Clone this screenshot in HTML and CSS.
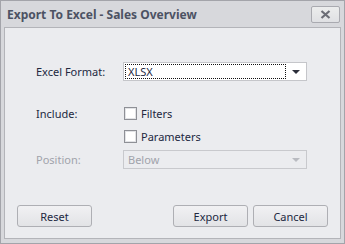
FILE: index.html
```html
<!DOCTYPE html>
<html>
<head>
  <meta charset="utf-8">
  <title>Export To Excel - Sales Overview</title>
  <link rel="stylesheet" href="styles.css">
</head>
<body>
  <div class="window">
    <div class="titlebar">
      <span class="title">Export To Excel - Sales Overview</span>
      <button class="close" title="Close">
        <svg width="11" height="9" viewBox="0 0 11 9"><path d="M1.5 1 L9.5 8 M9.5 1 L1.5 8" stroke="#6b6d76" stroke-width="2.2"/></svg>
      </button>
    </div>

    <div class="panel">
      <div class="row format-row">
        <label class="label">Excel Format:</label>
        <div class="combo">
          <span class="value focused">XLSX</span>
          <span class="arrow"></span>
        </div>
      </div>

      <div class="row check-row include-row">
        <label class="label">Include:</label>
        <span class="check"></span>
        <span class="check-text">Filters</span>
      </div>
      <div class="row check-row">
        <span class="label"></span>
        <span class="check"></span>
        <span class="check-text">Parameters</span>
      </div>

      <div class="row position-row disabled">
        <label class="label">Position:</label>
        <div class="combo">
          <span class="value">Below</span>
          <span class="arrow"></span>
        </div>
      </div>

      <div class="buttons">
        <button class="btn">Reset</button>
        <span class="spacer"></span>
        <button class="btn">Export</button>
        <button class="btn">Cancel</button>
      </div>
    </div>
  </div>
</body>
</html>
```

FILE: styles.css
```css
body {
  margin: 0;
  font-family: "Noto Sans", "DejaVu Sans", sans-serif;
  font-size: 11px;
  color: #22283f;
}
.window {
  width: 345px;
  height: 244px;
  box-sizing: border-box;
  border: 1px solid #a3a4aa;
  background: #d7d8dc;
  display: flex;
  flex-direction: column;
}
.titlebar {
  height: 26px;
  display: flex;
  align-items: center;
  padding: 0 4px 0 6px;
}
.title {
  flex: 1;
  font-size: 12px;
  font-weight: bold;
  color: #4c5263;
  padding-top: 1px;
}
.close {
  width: 29px;
  height: 17px;
  padding: 0;
  margin-top: 1px;
  border: 1px solid #a9aab0;
  border-radius: 2px;
  background: linear-gradient(#eceded, #dfe0e3);
  display: flex;
  align-items: center;
  justify-content: center;
}
.panel {
  flex: 1;
  margin: 0 3px 4px 3px;
  border: 1px solid #b3b4b9;
  background: #ebecef;
  padding: 34px 12px 0 12px;
  display: flex;
  flex-direction: column;
}
.row {
  display: flex;
  align-items: center;
}
.label {
  width: 106px;
  padding-left: 19px;
  box-sizing: border-box;
  flex: none;
  white-space: nowrap;
}
.combo {
  width: 184px;
  height: 19px;
  box-sizing: border-box;
  border: 1px solid #c5c6ca;
  background: #fff;
  display: flex;
  align-items: center;
  padding: 1px;
}
.value {
  flex: 1;
  height: 100%;
  box-sizing: border-box;
  display: flex;
  align-items: center;
  padding-left: 2px;
  border: 1px solid transparent;
}
.value.focused {
  border: 1px dotted #111;
}
.arrow {
  width: 0;
  height: 0;
  margin: 0 5px 0 6px;
  border-left: 4px solid transparent;
  border-right: 4px solid transparent;
  border-top: 4px solid #2c2f3a;
}
.include-row {
  margin-top: 25px;
}
.check-row {
  height: 15px;
}
.check-row + .check-row {
  margin-top: 8px;
}
.check {
  width: 13px;
  height: 13px;
  box-sizing: border-box;
  margin-left: 1px;
  border: 1px solid #8e9096;
  background: #fff;
  box-shadow: inset 0 0 0 1px #e2e3e6;
}
.check-text {
  margin-left: 4px;
}
.position-row {
  margin-top: 6px;
}
.disabled {
  color: #a1a3ab;
}
.disabled .combo {
  background: #ebecef;
  border-color: #c8c9cd;
}
.disabled .arrow {
  border-top-color: #b9bbc1;
}
.buttons {
  display: flex;
  gap: 5px;
  margin-top: 36px;
}
.spacer {
  flex: 1;
}
.btn {
  width: 75px;
  height: 22px;
  border: 1px solid #aeafb4;
  border-radius: 3px;
  background: linear-gradient(#f1f1f3, #e2e3e6);
  font-family: inherit;
  font-size: 11px;
  color: #22283f;
  padding: 0;
}
```
